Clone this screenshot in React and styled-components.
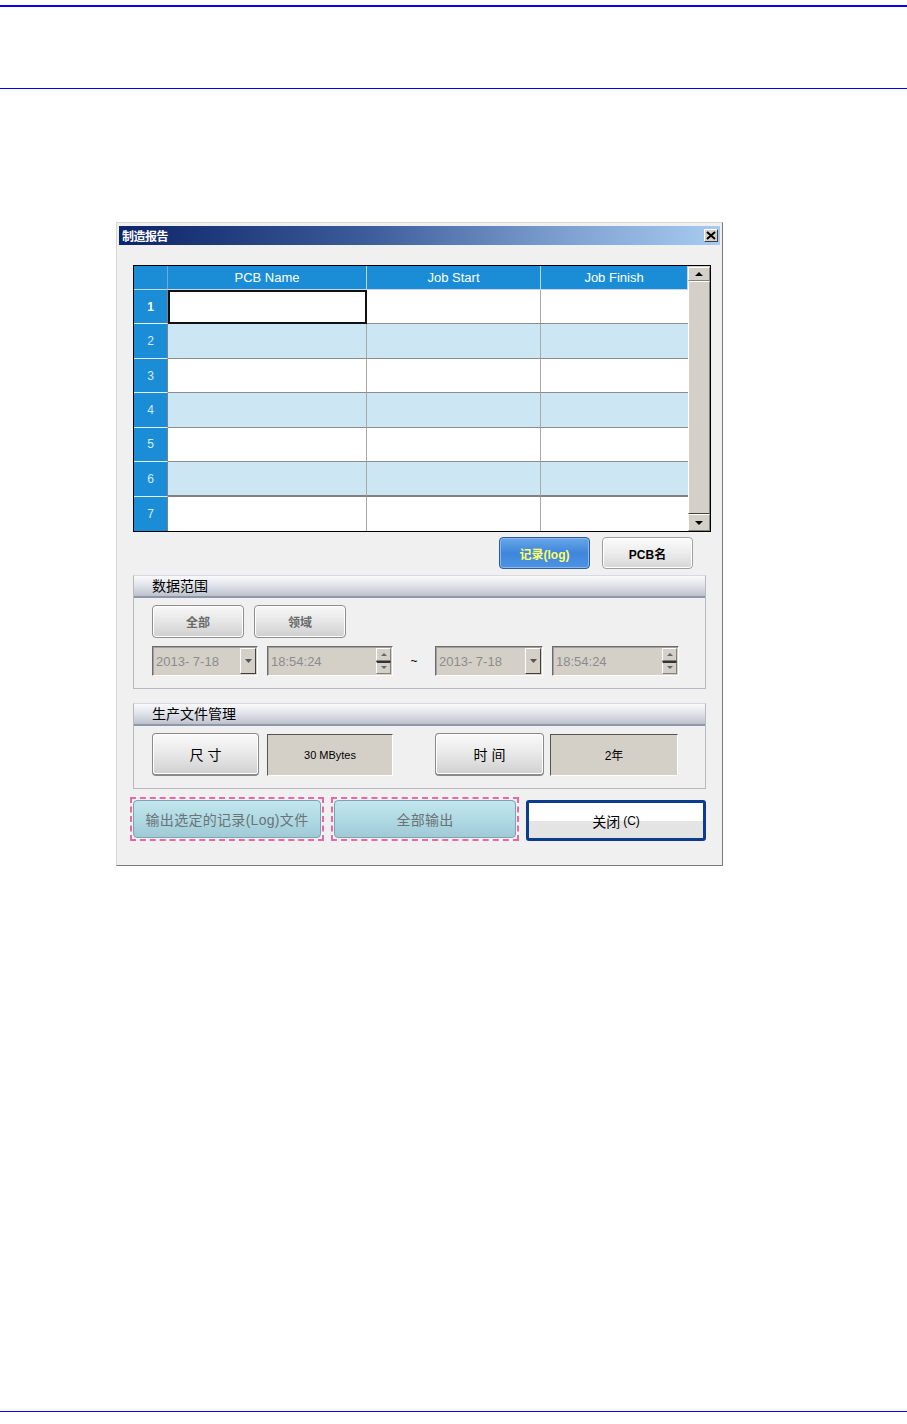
import React from "react";
import styled, { createGlobalStyle } from "styled-components";

const GlobalStyle = createGlobalStyle`
  html, body {
    margin: 0;
    padding: 0;
    background: #ffffff;
  }
  body {
    font-family: "Liberation Sans", "Noto Sans CJK SC", sans-serif;
  }
`;

// 표 데이터
const columns = ["PCB Name", "Job Start", "Job Finish"];
const rows = [1, 2, 3, 4, 5, 6, 7];

const App = () => {
  return (
    <>
      <GlobalStyle />
      <Page>
        <Rule $thick />
        <Rule $gap={81} />
        <Dialog>
          <TitleBar>
            <span>制造报告</span>
            <CloseBox>
              <svg width="10" height="9" viewBox="0 0 10 9">
                <path d="M1 1 L9 8 M9 1 L1 8" stroke="#000" strokeWidth="2" />
              </svg>
            </CloseBox>
          </TitleBar>
          <Body>
            <GridFrame>
              <Table>
                <HeadCell $corner />
                {columns.map((c) => (
                  <HeadCell key={c}>{c}</HeadCell>
                ))}
                {rows.map((r) => (
                  <React.Fragment key={r}>
                    <RowHead $first={r === 1} $last={r === 7}>{r}</RowHead>
                    {columns.map((c, i) => (
                      <Cell
                        key={c}
                        $alt={r % 2 === 0}
                        $focus={r === 1 && i === 0}
                        $thick={r === 6}
                        $last={r === 7}
                        $lastCol={i === 2}
                      />
                    ))}
                  </React.Fragment>
                ))}
              </Table>
              <ScrollBar>
                <ScrollBtn $h={14}>
                  <svg width="8" height="4" viewBox="0 0 8 4"><path d="M0 4 L4 0 L8 4 Z" fill="#000" /></svg>
                </ScrollBtn>
                <Thumb />
                <ScrollBtn $h={17}>
                  <svg width="8" height="4" viewBox="0 0 8 4"><path d="M0 0 L4 4 L8 0 Z" fill="#000" /></svg>
                </ScrollBtn>
              </ScrollBar>
            </GridFrame>

            <ModeRow>
              <ModeButton $active>记录(log)</ModeButton>
              <ModeButton>PCB名</ModeButton>
            </ModeRow>

            <Group>
              <GroupHead>数据范围</GroupHead>
              <GroupBody $bottom={12}>
                <FlexRow $gap={10}>
                  <GrayButton $w={92}>全部</GrayButton>
                  <GrayButton $w={92}>领域</GrayButton>
                </FlexRow>
                <DateRow>
                  <Field $w={106}>
                    <FieldText>2013- 7-18</FieldText>
                    <DropBtn>
                      <svg width="7" height="4" viewBox="0 0 7 4"><path d="M0 0 L3.5 4 L7 0 Z" fill="#555" /></svg>
                    </DropBtn>
                  </Field>
                  <Field $w={126}>
                    <FieldText>18:54:24</FieldText>
                    <Spin>
                      <SpinBtn>
                        <svg width="6" height="3" viewBox="0 0 6 3"><path d="M0 3 L3 0 L6 3 Z" fill="#666" /></svg>
                      </SpinBtn>
                      <SpinBtn $down>
                        <svg width="6" height="3" viewBox="0 0 6 3"><path d="M0 0 L3 3 L6 0 Z" fill="#666" /></svg>
                      </SpinBtn>
                    </Spin>
                  </Field>
                  <Tilde>~</Tilde>
                  <Field $w={108}>
                    <FieldText>2013- 7-18</FieldText>
                    <DropBtn>
                      <svg width="7" height="4" viewBox="0 0 7 4"><path d="M0 0 L3.5 4 L7 0 Z" fill="#555" /></svg>
                    </DropBtn>
                  </Field>
                  <Field $w={127}>
                    <FieldText>18:54:24</FieldText>
                    <Spin>
                      <SpinBtn>
                        <svg width="6" height="3" viewBox="0 0 6 3"><path d="M0 3 L3 0 L6 3 Z" fill="#666" /></svg>
                      </SpinBtn>
                      <SpinBtn $down>
                        <svg width="6" height="3" viewBox="0 0 6 3"><path d="M0 0 L3 3 L6 0 Z" fill="#666" /></svg>
                      </SpinBtn>
                    </Spin>
                  </Field>
                </DateRow>
              </GroupBody>
            </Group>

            <Group $top={14}>
              <GroupHead>生产文件管理</GroupHead>
              <GroupBody $bottom={12}>
                <FlexRow $gap={8}>
                  <SetButton $w={107}>尺 寸</SetButton>
                  <ValueBox $w={126} $small>30 MBytes</ValueBox>
                  <SetButton $w={109} $ml={34}>时 间</SetButton>
                  <ValueBox $w={128} $ml={-2}>2年</ValueBox>
                </FlexRow>
              </GroupBody>
            </Group>

            <Footer>
              <DashedButton $w={194}>
                <TealFace>输出选定的记录(Log)文件</TealFace>
              </DashedButton>
              <DashedButton $w={188}>
                <TealFace>全部输出</TealFace>
              </DashedButton>
              <CloseButton>
                关闭 <small>(C)</small>
              </CloseButton>
            </Footer>
          </Body>
        </Dialog>
        <Spacer />
        <Rule $bottom />
      </Page>
    </>
  );
};

export default App;

const Page = styled.div`
  width: 907px;
  height: 1424px;
  display: flex;
  flex-direction: column;
  overflow: hidden;
`;

const Rule = styled.div`
  flex: none;
  height: ${(p) => (p.$thick ? 2 : 1)}px;
  background: #0000ff;
  margin-top: ${(p) => (p.$thick ? 5 : p.$gap || 0)}px;
  margin-bottom: ${(p) => (p.$bottom ? 12 : 0)}px;
`;

const Spacer = styled.div`
  flex: 1;
`;

const Dialog = styled.div`
  flex: none;
  margin: 133px 0 0 116px;
  width: 607px;
  height: 644px;
  box-sizing: border-box;
  border: 1px solid;
  border-color: #d8d6d0 #7a7a7a #7a7a7a #d8d6d0;
  padding: 3px 2px 0 2px;
  background: #f0f0f0;
  display: flex;
  flex-direction: column;
`;

const TitleBar = styled.div`
  height: 19px;
  display: flex;
  align-items: center;
  justify-content: space-between;
  padding: 0 2px 0 3px;
  background: linear-gradient(to right, #0c2468 0%, #3a5a98 40%, #7fa2d2 75%, #a8cbf0 100%);
  span {
    color: #ffffff;
    font-size: 12px;
    font-weight: bold;
    letter-spacing: -0.5px;
  }
`;

const CloseBox = styled.div`
  width: 14px;
  height: 13px;
  box-sizing: border-box;
  background: #d4d0c8;
  border: 1px solid;
  border-color: #ffffff #404040 #404040 #ffffff;
  display: flex;
  align-items: center;
  justify-content: center;
`;

const Body = styled.div`
  display: flex;
  flex-direction: column;
  padding: 0 0 0 14px;
`;

const GridFrame = styled.div`
  margin-top: 20px;
  width: 578px;
  height: 267px;
  box-sizing: border-box;
  border: 1px solid #000000;
  display: flex;
  background: #ffffff;
`;

const Table = styled.div`
  display: grid;
  grid-template-columns: 34px 199px 174px 147px;
  grid-template-rows: 24px repeat(7, 1fr);
  font-size: 13px;
`;

const HeadCell = styled.div`
  box-sizing: border-box;
  background: #1a8dd6;
  color: #ffffff;
  display: flex;
  align-items: center;
  justify-content: center;
  font-size: 13px;
  border-right: 1px solid ${(p) => (p.$corner ? "#6aaee0" : "#b8d8ee")};
  border-bottom: 1px solid #c8d8e4;
`;

const RowHead = styled.div`
  box-sizing: border-box;
  background: #1a8dd6;
  color: ${(p) => (p.$first ? "#ffffff" : "#d4ecfc")};
  font-weight: ${(p) => (p.$first ? "bold" : "normal")};
  font-size: 12px;
  display: flex;
  align-items: center;
  justify-content: center;
  border-right: 1px solid #808080;
  border-bottom: ${(p) => (p.$last ? "none" : "1px solid #e8f2fa")};
`;

const Cell = styled.div`
  box-sizing: border-box;
  background: ${(p) => (p.$alt ? "#cde6f3" : "#ffffff")};
  border-right: ${(p) => (p.$lastCol ? "none" : "1px solid #a8a8a8")};
  border-bottom: ${(p) => (p.$last ? "none" : p.$thick ? "2px solid #808080" : "1px solid #8c8c8c")};
  outline: ${(p) => (p.$focus ? "2px solid #111" : "none")};
  outline-offset: -2px;
`;

const ScrollBar = styled.div`
  flex: 1;
  display: flex;
  flex-direction: column;
  background: #d4d0c8;
  padding-top: 1px;
`;

const ScrollBtn = styled.div`
  height: ${(p) => p.$h}px;
  box-sizing: border-box;
  background: #d4d0c8;
  border: 1px solid;
  border-color: #ffffff #808080 #808080 #ffffff;
  display: flex;
  align-items: center;
  justify-content: center;
`;

const Thumb = styled.div`
  flex: 1;
  box-sizing: border-box;
  background: #d4d0c8;
  border: 1px solid;
  border-color: #ffffff #808080 #404040 #ffffff;
`;

const ModeRow = styled.div`
  display: flex;
  justify-content: flex-end;
  gap: 12px;
  margin-top: 5px;
  width: 560px;
`;

const ModeButton = styled.div`
  width: 91px;
  height: 32px;
  box-sizing: border-box;
  border-radius: 4px;
  display: flex;
  align-items: center;
  justify-content: center;
  font-size: 12px;
  font-weight: bold;
  border: 1px solid ${(p) => (p.$active ? "#2c5c9e" : "#a0a0a0")};
  color: ${(p) => (p.$active ? "#ffff66" : "#000000")};
  background: ${(p) =>
    p.$active
      ? "linear-gradient(#68a6ea, #3f86db 50%, #4d93e4)"
      : "linear-gradient(#fbfbfb, #ececec 50%, #d6d6d6)"};
  box-shadow: ${(p) => (p.$active ? "inset 0 0 0 1px #8ab8ec" : "inset 0 0 0 1px #ffffff")};
`;

const Group = styled.div`
  margin-top: ${(p) => p.$top || 6}px;
  width: 573px;
  box-sizing: border-box;
  border: 1px solid #b6b9c0;
  border-top-color: #d8dae0;
`;

const GroupHead = styled.div`
  height: 22px;
  box-sizing: border-box;
  padding-left: 18px;
  font-size: 14px;
  line-height: 20px;
  color: #000000;
  background: linear-gradient(#fafafc, #e2e4ea 45%, #c8ccd6 85%, #bcc1cc);
  border-bottom: 2px solid #8e98ab;
`;

const GroupBody = styled.div`
  padding: 7px 0 ${(p) => p.$bottom}px 18px;
`;

const FlexRow = styled.div`
  display: flex;
  align-items: center;
  gap: ${(p) => p.$gap}px;
`;

const GrayButton = styled.div`
  width: ${(p) => p.$w}px;
  height: 33px;
  box-sizing: border-box;
  border: 1px solid #8e8e8e;
  border-radius: 4px;
  background: linear-gradient(#f8f8f8, #e6e6e6 50%, #cfcfcf);
  box-shadow: inset 0 0 0 1px #ffffff;
  display: flex;
  align-items: center;
  justify-content: center;
  font-size: 12px;
  font-weight: bold;
  color: #6a6a6a;
`;

const DateRow = styled.div`
  display: flex;
  align-items: center;
  margin-top: 8px;
  gap: 9px;
`;

const Field = styled.div`
  width: ${(p) => p.$w}px;
  height: 30px;
  box-sizing: border-box;
  background: #d4d0c8;
  border: 1px solid;
  border-color: #6c6c6c #ffffff #ffffff #6c6c6c;
  box-shadow: inset 1px 1px 0 #a0a0a0;
  display: flex;
  align-items: center;
  justify-content: space-between;
  padding: 0 1px 0 3px;
`;

const FieldText = styled.span`
  font-size: 13px;
  color: #8c8c8c;
`;

const DropBtn = styled.div`
  width: 16px;
  height: 26px;
  box-sizing: border-box;
  background: #d4d0c8;
  border: 1px solid;
  border-color: #ffffff #404040 #404040 #ffffff;
  display: flex;
  align-items: center;
  justify-content: center;
`;

const Spin = styled.div`
  width: 15px;
  height: 26px;
  display: flex;
  flex-direction: column;
`;

const SpinBtn = styled.div`
  flex: 1;
  box-sizing: border-box;
  background: #d4d0c8;
  border: 1px solid;
  border-color: #ffffff #808080 #808080 #ffffff;
  border-top: ${(p) => (p.$down ? "2px solid #333" : "1px solid #ffffff")};
  display: flex;
  align-items: center;
  justify-content: center;
`;

const Tilde = styled.div`
  width: 24px;
  text-align: center;
  font-size: 12px;
  color: #000;
`;

const SetButton = styled.div`
  width: ${(p) => p.$w}px;
  height: 43px;
  margin-left: ${(p) => p.$ml || 0}px;
  box-sizing: border-box;
  border: 1px solid #8a8a8a;
  border-bottom-width: 2px;
  border-radius: 4px;
  background: linear-gradient(#fafafa, #e8e8e8 50%, #d0d0d0);
  box-shadow: inset 0 0 0 1px #ffffff;
  display: flex;
  align-items: center;
  justify-content: center;
  font-size: 14px;
  color: #000000;
`;

const ValueBox = styled.div`
  width: ${(p) => p.$w}px;
  height: 42px;
  margin-left: ${(p) => p.$ml || 0}px;
  box-sizing: border-box;
  background: #d4d0c8;
  border: 1px solid;
  border-color: #555555 #ffffff #ffffff #555555;
  display: flex;
  align-items: center;
  justify-content: center;
  font-size: ${(p) => (p.$small ? 11 : 12)}px;
  color: #000000;
`;

const Footer = styled.div`
  display: flex;
  align-items: flex-start;
  gap: 7px;
  margin: 8px 0 0 -3px;
`;

const DashedButton = styled.div`
  width: ${(p) => p.$w}px;
  height: 44px;
  box-sizing: border-box;
  border: 2px dashed #e46aa8;
  padding: 1px;
  display: flex;
`;

const TealFace = styled.div`
  flex: 1;
  border: 1px solid #7aa4b0;
  border-radius: 4px;
  background: linear-gradient(#c2e6ee, #b0dae4 50%, #9fcad6);
  display: flex;
  align-items: center;
  justify-content: center;
  font-size: 14px;
  color: #6c7276;
  letter-spacing: 0.3px;
`;

const CloseButton = styled.div`
  width: 180px;
  height: 41px;
  margin-top: 3px;
  box-sizing: border-box;
  border: 3px solid #0b3c8e;
  border-radius: 3px;
  background: linear-gradient(#ffffff 52%, #e4e4e4 52%);
  display: flex;
  align-items: center;
  justify-content: center;
  font-size: 14px;
  color: #000000;
  small {
    font-size: 12px;
    margin-left: 3px;
  }
`;
